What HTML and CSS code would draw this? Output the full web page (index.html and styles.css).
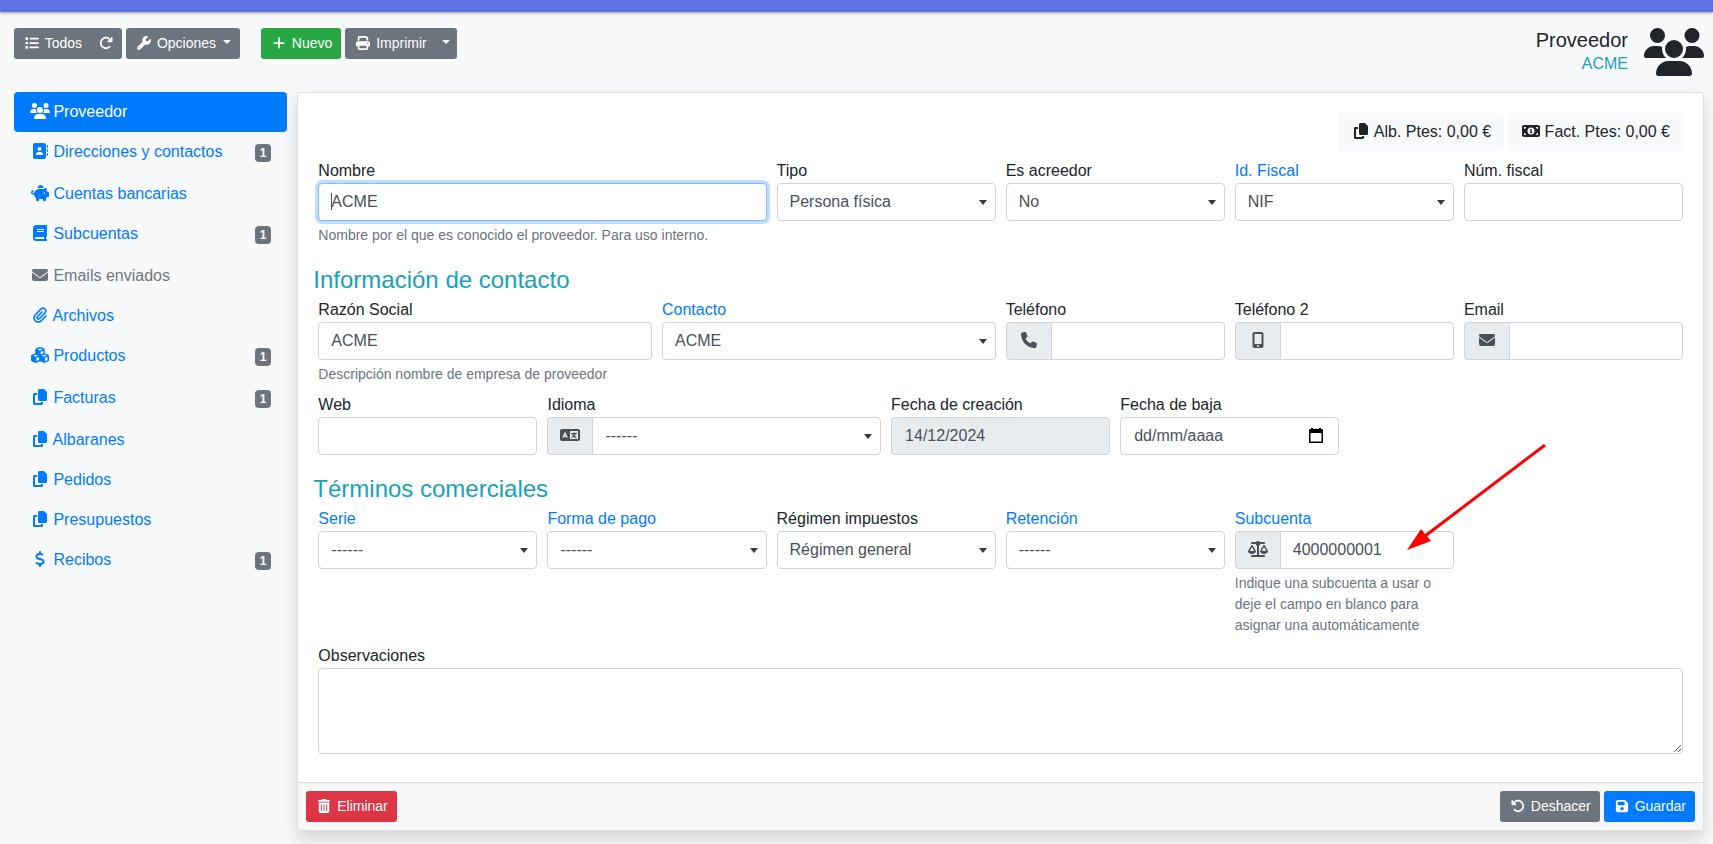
FILE: index.html
```html
<!DOCTYPE html>
<html lang="es">
<head>
<meta charset="utf-8">
<meta name="viewport" content="width=device-width, initial-scale=1">
<title>Proveedor ACME</title>
<link rel="stylesheet" href="styles.css">
</head>
<body>
<svg class="sprite" aria-hidden="true">
  <symbol id="i-list" viewBox="0 0 512 512"><path d="M40 48C26.700 48 16 58.700 16 72v48c0 13.300 10.700 24 24 24H88c13.300 0 24-10.700 24-24V72c0-13.300-10.700-24-24-24H40zM192 64c-17.700 0-32 14.300-32 32s14.300 32 32 32H480c17.700 0 32-14.300 32-32s-14.300-32-32-32H192zm0 160c-17.700 0-32 14.300-32 32s14.300 32 32 32H480c17.700 0 32-14.300 32-32s-14.300-32-32-32H192zm0 160c-17.700 0-32 14.300-32 32s14.300 32 32 32H480c17.700 0 32-14.300 32-32s-14.300-32-32-32H192zM16 232v48c0 13.300 10.700 24 24 24H88c13.300 0 24-10.700 24-24V232c0-13.300-10.700-24-24-24H40c-13.300 0-24 10.700-24 24zM40 368c-13.300 0-24 10.700-24 24v48c0 13.300 10.700 24 24 24H88c13.300 0 24-10.700 24-24V392c0-13.300-10.700-24-24-24H40z"/></symbol>
  <symbol id="i-redo" viewBox="0 0 512 512"><path d="M386.300 160H336c-17.700 0-32 14.300-32 32s14.300 32 32 32H464c17.700 0 32-14.300 32-32V64c0-17.700-14.300-32-32-32s-32 14.300-32 32v51.200L414.400 97.600c-87.500-87.500-229.300-87.500-316.800 0s-87.500 229.300 0 316.800s229.300 87.500 316.800 0c12.500-12.500 12.500-32.800 0-45.300s-32.800-12.500-45.300 0c-62.500 62.500-163.800 62.500-226.300 0s-62.500-163.800 0-226.300s163.800-62.500 226.300 0L386.300 160z"/></symbol>
  <symbol id="i-undo" viewBox="0 0 512 512"><path d="M125.700 160H176c17.700 0 32 14.300 32 32s-14.300 32-32 32H48c-17.700 0-32-14.300-32-32V64c0-17.700 14.300-32 32-32s32 14.300 32 32v51.200L97.600 97.600c87.500-87.500 229.300-87.500 316.800 0s87.500 229.300 0 316.800s-229.300 87.500-316.800 0c-12.500-12.500-12.500-32.800 0-45.300s32.800-12.500 45.300 0c62.500 62.500 163.800 62.500 226.300 0s62.500-163.800 0-226.300s-163.800-62.500-226.300 0L125.700 160z"/></symbol>
  <symbol id="i-wrench" viewBox="0 0 512 512"><path d="M352 320c88.400 0 160-71.600 160-160c0-15.300-2.200-30.100-6.200-44.200c-3.100-10.800-16.400-13.200-24.300-5.300l-76.800 76.800c-3 3-7.100 4.700-11.300 4.700H336c-8.800 0-16-7.200-16-16V118.600c0-4.200 1.700-8.300 4.700-11.300l76.800-76.800c7.900-7.900 5.400-21.200-5.300-24.300C382.100 2.200 367.300 0 352 0C263.600 0 192 71.600 192 160c0 19.100 3.400 37.500 9.500 54.500L19.900 396.100C7.200 408.800 0 426.100 0 444.100C0 481.600 30.400 512 67.900 512c18 0 35.300-7.200 48-19.900L297.500 310.500c17 6.200 35.400 9.500 54.500 9.500zM80 408a24 24 0 1 1 0 48 24 24 0 1 1 0-48z"/></symbol>
  <symbol id="i-plus" viewBox="0 0 448 512"><path d="M256 80c0-17.700-14.300-32-32-32s-32 14.300-32 32V224H48c-17.700 0-32 14.300-32 32s14.300 32 32 32H192V432c0 17.700 14.300 32 32 32s32-14.300 32-32V288H400c17.700 0 32-14.300 32-32s-14.300-32-32-32H256V80z"/></symbol>
  <symbol id="i-print" viewBox="0 0 512 512"><path d="M128 0C92.700 0 64 28.700 64 64v96h64V64H354.700L384 93.300V160h64V93.300c0-17-6.700-33.300-18.700-45.300L400 18.700C388 6.700 371.700 0 354.700 0H128zM384 352v32 64H128V384 368 352H384zm64 32h32c17.700 0 32-14.300 32-32V256c0-35.300-28.700-64-64-64H64c-35.300 0-64 28.700-64 64v96c0 17.700 14.300 32 32 32H64v64c0 35.300 28.700 64 64 64H384c35.300 0 64-28.700 64-64V384zM432 248a24 24 0 1 1 0 48 24 24 0 1 1 0-48z"/></symbol>
  <symbol id="i-users" viewBox="0 0 640 512"><path d="M144 0a80 80 0 1 1 0 160A80 80 0 1 1 144 0zM512 0a80 80 0 1 1 0 160A80 80 0 1 1 512 0zM0 298.700C0 239.800 47.800 192 106.700 192h42.700c15.900 0 31 3.500 44.600 9.700c-1.300 7.200-1.900 14.700-1.900 22.300c0 38.200 16.800 72.500 43.300 96H21.300C9.600 320 0 310.400 0 298.700zM405.300 320h-.7c26.600-23.500 43.300-57.800 43.300-96c0-7.600-.7-15-1.900-22.300c13.600-6.300 28.700-9.700 44.600-9.700h42.700C592.200 192 640 239.800 640 298.700c0 11.800-9.600 21.300-21.300 21.300H405.300zM224 224a96 96 0 1 1 192 0 96 96 0 1 1 -192 0zM128 485.300C128 411.700 187.700 352 261.300 352H378.700C452.300 352 512 411.700 512 485.300c0 14.700-11.900 26.700-26.700 26.700H154.700c-14.700 0-26.700-11.900-26.700-26.700z"/></symbol>
  <symbol id="i-address" viewBox="0 0 512 512"><path d="M96 0C60.700 0 32 28.700 32 64V448c0 35.300 28.700 64 64 64H384c35.300 0 64-28.700 64-64V64c0-35.300-28.700-64-64-64H96zM208 288h64c44.200 0 80 35.800 80 80c0 8.800-7.200 16-16 16H144c-8.800 0-16-7.200-16-16c0-44.200 35.800-80 80-80zm-32-96a64 64 0 1 1 128 0 64 64 0 1 1 -128 0zM512 80c0-8.800-7.200-16-16-16s-16 7.200-16 16v64c0 8.800 7.200 16 16 16s16-7.200 16-16V80zM496 192c-8.800 0-16 7.200-16 16v64c0 8.800 7.200 16 16 16s16-7.200 16-16V208c0-8.800-7.200-16-16-16zm16 144c0-8.800-7.200-16-16-16s-16 7.200-16 16v64c0 8.800 7.200 16 16 16s16-7.200 16-16V336z"/></symbol>
  <symbol id="i-piggy" viewBox="0 0 576 512"><path d="M400 96l0 .7c-5.300-.4-10.600-.7-16-.7H256c-16.500 0-32.500 2.100-47.800 6c-.1-2-.2-4-.2-6c0-53 43-96 96-96s96 43 96 96zm-16 32c3.500 0 7 .1 10.400 .3c4.200 .3 8.400 .7 12.600 1.300C424.600 109.100 450.800 96 480 96h11.500c10.400 0 18 9.800 15.500 19.900l-13.800 55.200c15.800 14.800 28.700 32.800 37.500 52.900H544c17.700 0 32 14.300 32 32v96c0 17.700-14.300 32-32 32H512c-9.100 12.100-19.900 22.900-32 32v64c0 17.700-14.300 32-32 32H416c-17.700 0-32-14.300-32-32V448H256v32c0 17.700-14.300 32-32 32H192c-17.700 0-32-14.300-32-32V416c-34.900-26.200-58.700-66.300-63.200-112H68c-37.600 0-68-30.400-68-68s30.400-68 68-68h4c13.300 0 24 10.700 24 24s-10.700 24-24 24H68c-11 0-20 9-20 20s9 20 20 20H99.200c12.100-59.800 57.700-107.500 116.300-122.800c12.900-3.400 26.500-5.200 40.500-5.200H384zm64 136a24 24 0 1 0 -48 0 24 24 0 1 0 48 0z"/></symbol>
  <symbol id="i-book" viewBox="0 0 448 512"><path d="M96 0C43 0 0 43 0 96V416c0 53 43 96 96 96H384h32c17.700 0 32-14.300 32-32s-14.300-32-32-32V384c17.700 0 32-14.300 32-32V32c0-17.700-14.300-32-32-32H384 96zm0 384H352v64H96c-17.700 0-32-14.300-32-32s14.300-32 32-32zm32-240c0-8.800 7.200-16 16-16H336c8.800 0 16 7.200 16 16s-7.200 16-16 16H144c-8.800 0-16-7.200-16-16zm16 48H336c8.800 0 16 7.200 16 16s-7.200 16-16 16H144c-8.800 0-16-7.200-16-16s7.200-16 16-16z"/></symbol>
  <symbol id="i-envelope" viewBox="0 0 512 512"><path d="M48 64C21.500 64 0 85.500 0 112c0 15.100 7.100 29.300 19.200 38.400L236.800 313.600c11.400 8.500 27 8.500 38.400 0L492.800 150.400c12.100-9.100 19.200-23.300 19.200-38.400c0-26.500-21.500-48-48-48H48zM0 176V384c0 35.300 28.700 64 64 64H448c35.300 0 64-28.700 64-64V176L294.400 339.200c-22.800 17.100-54 17.100-76.800 0L0 176z"/></symbol>
  <symbol id="i-clip" viewBox="0 0 448 512"><path d="M364.200 83.800c-24.400-24.400-64-24.400-88.400 0l-184 184c-42.100 42.100-42.100 110.300 0 152.400s110.300 42.100 152.400 0l152-152c10.900-10.900 28.700-10.900 39.600 0s10.900 28.700 0 39.600l-152 152c-64 64-167.600 64-231.600 0s-64-167.600 0-231.600l184-184c46.300-46.300 121.300-46.300 167.600 0s46.300 121.300 0 167.600l-176 176c-28.600 28.600-75 28.600-103.600 0s-28.600-75 0-103.600l144-144c10.900-10.900 28.700-10.900 39.600 0s10.900 28.700 0 39.600l-144 144c-6.700 6.700-6.700 17.700 0 24.400s17.700 6.700 24.400 0l176-176c24.400-24.400 24.400-64 0-88.400z"/></symbol>
  <symbol id="i-cubes" viewBox="0 0 576 512"><path d="M290.800 48.600l78.400 29.700L288 109.500 206.800 78.300l78.400-29.700c1.800-.7 3.800-.7 5.700 0zM136 92.500V204.700c-1.300 .4-2.600 .8-3.900 1.300l-96 36.400C14.400 250.600 0 271.500 0 294.700V413.900c0 22.200 13.100 42.300 33.500 51.300l96 42.200c14.400 6.300 30.700 6.300 45.100 0L288 457.500l113.500 49.900c14.400 6.300 30.700 6.300 45.100 0l96-42.200c20.300-8.900 33.500-29.100 33.500-51.300V294.700c0-23.300-14.400-44.100-36.100-52.400l-96-36.400c-1.300-.5-2.600-.9-3.900-1.300V92.500c0-23.300-14.400-44.100-36.100-52.400l-96-36.400c-12.800-4.800-26.900-4.800-39.700 0l-96 36.400C150.400 48.400 136 69.300 136 92.500zM392 210.600l-82.400 31.200V152.600L392 121v89.600zM154.800 250.900l78.400 29.700L152 311.700 70.800 280.600l78.400-29.700c1.800-.7 3.800-.7 5.700 0zm18.800 204.400V354.800L256 323.200v95.900l-82.400 36.200zM421.200 250.900c1.800-.7 3.800-.7 5.700 0l78.400 29.700L424 311.700l-81.200-31.100 78.400-29.700zM523.200 421.200l-77.600 34.100V354.800L528 323.200v90.700c0 3.200-1.900 6-4.800 7.300z"/></symbol>
  <symbol id="i-copy" viewBox="0 0 448 512"><path d="M208 0H332.100c12.700 0 24.900 5.100 33.900 14.100l67.900 67.900c9 9 14.100 21.200 14.100 33.900V336c0 26.500-21.500 48-48 48H208c-26.500 0-48-21.500-48-48V48c0-26.500 21.500-48 48-48zM48 128h80v64H64V448H256V416h64v48c0 26.500-21.500 48-48 48H48c-26.500 0-48-21.500-48-48V176c0-26.500 21.500-48 48-48z"/></symbol>
  <symbol id="i-dollar" viewBox="0 0 320 512"><path d="M160 0c17.700 0 32 14.300 32 32V67.700c1.600 .2 3.100 .4 4.700 .7c.4 .1 .7 .1 1.100 .2l48 8.800c17.400 3.200 28.900 19.900 25.700 37.200s-19.900 28.900-37.200 25.700l-47.500-8.700c-31.300-4.600-58.900-1.500-78.300 6.200s-27.200 18.300-29 28.100c-2 10.700-.5 16.700 1.200 20.400c1.800 3.900 5.500 8.300 12.800 13.200c16.300 10.700 41.300 17.700 73.700 26.300l2.900 .8c28.600 7.600 63.600 16.800 89.600 33.800c14.200 9.300 27.600 21.900 35.900 39.500c8.500 17.900 10.300 37.900 6.400 59.200c-6.900 38-33.100 63.400-65.600 76.700c-13.700 5.600-28.600 9.200-44.400 11V480c0 17.700-14.300 32-32 32s-32-14.300-32-32V445.100l-1.500-.2c-24.400-3.800-64.500-14.300-91.500-26.300c-16.100-7.200-23.400-26.100-16.200-42.200s26.100-23.400 42.200-16.200c20.900 9.300 55.300 18.500 75.200 21.600c31.900 4.700 58.200 2 76-5.300c16.900-6.900 24.600-16.900 26.800-28.900c1.900-10.600 .4-16.700-1.300-20.400c-1.900-4-5.600-8.400-13-13.300c-16.400-10.700-41.500-17.700-74-26.300l-2.800-.7C119.400 279.300 84.400 270 58.400 253c-14.200-9.300-27.500-22-35.800-39.600c-8.400-17.900-10.100-37.900-6.100-59.200C23.700 116 52.300 91.200 84.800 78.300c13.300-5.300 27.900-8.900 43.200-11V32c0-17.700 14.300-32 32-32z"/></symbol>
  <symbol id="i-money" viewBox="0 0 576 512"><path d="M64 64C28.700 64 0 92.700 0 128V384c0 35.300 28.700 64 64 64H512c35.300 0 64-28.700 64-64V128c0-35.300-28.700-64-64-64H64zm64 320H64V320c35.300 0 64 28.700 64 64zM64 192V128h64c0 35.300-28.700 64-64 64zM448 384c0-35.300 28.700-64 64-64v64H448zm64-192c-35.300 0-64-28.700-64-64h64v64zM288 144a112 112 0 1 0 0 224 112 112 0 1 0 0-224zM252 208c0-11 9-20 20-20h16c11 0 20 9 20 20v68h4c11 0 20 9 20 20s-9 20-20 20H264c-11 0-20-9-20-20s9-20 20-20h4V227.600c-9.100-1.900-16-9.900-16-19.600z" fill-rule="evenodd"/></symbol>
  <symbol id="i-phone" viewBox="0 0 512 512"><path d="M164.900 24.600c-7.700-18.600-28-28.500-47.400-23.200l-88 24C12.100 30.200 0 46 0 64C0 311.400 200.600 512 448 512c18 0 33.800-12.100 38.600-29.500l24-88c5.300-19.400-4.600-39.700-23.200-47.400l-96-40c-16.300-6.800-35.200-2.100-46.300 11.600L304.700 368C234.300 334.700 177.300 277.700 144 207.300L193.300 167c13.700-11.200 18.400-30 11.600-46.300l-40-96z"/></symbol>
  <symbol id="i-mobile" viewBox="0 0 384 512"><path d="M16 64C16 28.700 44.700 0 80 0H304c35.300 0 64 28.700 64 64V448c0 35.300-28.700 64-64 64H80c-35.300 0-64-28.700-64-64V64zM224 448a32 32 0 1 0 -64 0 32 32 0 1 0 64 0zM304 64H80V384H304V64z"/></symbol>
  <symbol id="i-language" viewBox="0 0 640 512"><path d="M0 128C0 92.700 28.700 64 64 64H576c35.300 0 64 28.700 64 64V384c0 35.300-28.700 64-64 64H64c-35.300 0-64-28.700-64-64V128zm320 0V384H576V128H320zM178.300 175.900c-3.200-7.200-10.400-11.900-18.300-11.900s-15.100 4.700-18.300 11.900l-64 144c-4.500 10.100 .1 21.900 10.200 26.400s21.900-.1 26.400-10.200l8.900-20.100h73.600l8.900 20.100c4.500 10.100 16.300 14.600 26.400 10.200s14.600-16.300 10.200-26.400l-64-144zM160 233.200L179 276H141l19-42.800z" fill-rule="evenodd"/><path d="M448 184v24M376 208H520M494 210C478 264 440 306 382 328M410 248C430 286 462 312 506 330" fill="none" stroke="currentColor" stroke-width="40" stroke-linecap="round"/></symbol>
  <symbol id="i-scale" viewBox="0 0 640 512"><path d="M384 32H512c17.700 0 32 14.300 32 32s-14.300 32-32 32H398.400c-5.200 25.800-22.900 47.100-46.400 57.300V448H512c17.700 0 32 14.300 32 32s-14.300 32-32 32H320 128c-17.700 0-32-14.300-32-32s14.300-32 32-32H288V153.300c-23.500-10.300-41.200-31.600-46.400-57.300H128c-17.700 0-32-14.300-32-32s14.300-32 32-32H256c14.600-19.400 37.800-32 64-32s49.400 12.600 64 32zm55.600 288H584.400L512 195.800 439.600 320zM512 416c-62.900 0-115.200-34-126-78.900c-2.600-11 1-22.300 6.700-32.100l95.200-163.200c5-8.600 14.200-13.800 24.100-13.800s19.100 5.300 24.100 13.800l95.200 163.200c5.700 9.800 9.300 21.100 6.700 32.100C627.200 382 574.900 416 512 416zM126.800 195.800L54.400 320H199.300L126.800 195.800zM.9 337.100c-2.600-11 1-22.300 6.700-32.100l95.200-163.200c5-8.600 14.200-13.800 24.100-13.800s19.100 5.300 24.100 13.800l95.200 163.200c5.700 9.800 9.300 21.100 6.700 32.100C242 382 189.700 416 126.800 416S11.700 382 .9 337.100z"/></symbol>
  <symbol id="i-trash" viewBox="0 0 448 512"><path d="M135.200 17.700C140.600 6.800 151.700 0 163.800 0H284.200c12.100 0 23.200 6.800 28.600 17.700L320 32h96c17.700 0 32 14.300 32 32s-14.300 32-32 32H32C14.300 96 0 81.700 0 64S14.300 32 32 32h96l7.200-14.300zM32 128H416V448c0 35.300-28.700 64-64 64H96c-35.300 0-64-28.700-64-64V128zm96 64c-8.800 0-16 7.200-16 16V432c0 8.800 7.200 16 16 16s16-7.200 16-16V208c0-8.800-7.200-16-16-16zm96 0c-8.800 0-16 7.200-16 16V432c0 8.800 7.200 16 16 16s16-7.200 16-16V208c0-8.800-7.200-16-16-16zm96 0c-8.800 0-16 7.200-16 16V432c0 8.800 7.200 16 16 16s16-7.200 16-16V208c0-8.800-7.200-16-16-16z"/></symbol>
  <symbol id="i-save" viewBox="0 0 448 512"><path d="M64 32C28.700 32 0 60.700 0 96V416c0 35.300 28.700 64 64 64H384c35.300 0 64-28.700 64-64V173.300c0-17-6.700-33.300-18.700-45.300L352 50.700C340 38.700 323.700 32 306.700 32H64zm0 96c0-17.700 14.300-32 32-32H288c17.700 0 32 14.300 32 32v64c0 17.700-14.300 32-32 32H96c-17.700 0-32-14.300-32-32V128zM224 288a64 64 0 1 1 0 128 64 64 0 1 1 0-128z"/></symbol>
  <symbol id="i-calendar" viewBox="0 0 14 15"><path d="M1 1h1V0h2v1h6V0h2v1h1q1 0 1 1v12q0 1-1 1H1q-1 0-1-1V2q0-1 1-1zM1.500 5v8.500h11V5z" fill-rule="evenodd"/></symbol>
</svg>

<div class="topbar"></div>

<div class="page">
  <header class="page-header">
    <div class="toolbar">
      <div class="btn-group">
        <a class="btn btn-secondary" href="#todos"><svg class="icon"><use href="#i-list"/></svg> Todos</a>
        <button class="btn btn-secondary" type="button" aria-label="Recargar"><svg class="icon icon-square"><use href="#i-redo"/></svg></button>
      </div>
      <button class="btn btn-secondary" type="button"><svg class="icon"><use href="#i-wrench"/></svg> Opciones <span class="caret"></span></button>
      <div class="toolbar-actions">
        <a class="btn btn-success" href="#nuevo"><svg class="icon"><use href="#i-plus"/></svg> Nuevo</a>
        <div class="btn-group">
          <button class="btn btn-secondary" type="button"><svg class="icon"><use href="#i-print"/></svg> Imprimir</button>
          <button class="btn btn-secondary btn-split" type="button" aria-label="Formatos de impresión"><span class="caret"></span></button>
        </div>
      </div>
    </div>
    <div class="page-title">
      <div class="page-title-text">
        <h1>Proveedor</h1>
        <p>ACME</p>
      </div>
      <svg class="page-title-icon"><use href="#i-users"/></svg>
    </div>
  </header>

  <div class="layout">
    <nav class="sidebar" aria-label="Secciones">
      <a class="nav-link active" href="#proveedor"><span><svg class="icon"><use href="#i-users"/></svg> Proveedor</span></a>
      <a class="nav-link" href="#direcciones"><span><svg class="icon"><use href="#i-address"/></svg> Direcciones y contactos</span><span class="badge">1</span></a>
      <a class="nav-link" href="#cuentas"><span><svg class="icon"><use href="#i-piggy"/></svg> Cuentas bancarias</span></a>
      <a class="nav-link" href="#subcuentas"><span><svg class="icon"><use href="#i-book"/></svg> Subcuentas</span><span class="badge">1</span></a>
      <a class="nav-link disabled" href="#emails"><span><svg class="icon"><use href="#i-envelope"/></svg> Emails enviados</span></a>
      <a class="nav-link" href="#archivos"><span><svg class="icon"><use href="#i-clip"/></svg> Archivos</span></a>
      <a class="nav-link" href="#productos"><span><svg class="icon"><use href="#i-cubes"/></svg> Productos</span><span class="badge">1</span></a>
      <a class="nav-link" href="#facturas"><span><svg class="icon"><use href="#i-copy"/></svg> Facturas</span><span class="badge">1</span></a>
      <a class="nav-link" href="#albaranes"><span><svg class="icon"><use href="#i-copy"/></svg> Albaranes</span></a>
      <a class="nav-link" href="#pedidos"><span><svg class="icon"><use href="#i-copy"/></svg> Pedidos</span></a>
      <a class="nav-link" href="#presupuestos"><span><svg class="icon"><use href="#i-copy"/></svg> Presupuestos</span></a>
      <a class="nav-link" href="#recibos"><span><svg class="icon"><use href="#i-dollar"/></svg> Recibos</span><span class="badge">1</span></a>
    </nav>

    <form class="card">
      <div class="card-body">
        <div class="stats">
          <button class="stat" type="button"><svg class="icon"><use href="#i-copy"/></svg> Alb. Ptes: 0,00 €</button>
          <button class="stat" type="button"><svg class="icon"><use href="#i-money"/></svg> Fact. Ptes: 0,00 €</button>
        </div>

        <div class="form-row">
          <div class="field span-4">
            <label for="nombre">Nombre</label>
            <input class="control is-focused" id="nombre" type="text" value="ACME">
            <small>Nombre por el que es conocido el proveedor. Para uso interno.</small>
          </div>
          <div class="field span-2">
            <label for="tipo">Tipo</label>
            <select class="control" id="tipo"><option>Persona física</option></select>
          </div>
          <div class="field span-2">
            <label for="acreedor">Es acreedor</label>
            <select class="control" id="acreedor"><option>No</option></select>
          </div>
          <div class="field span-2">
            <label for="idfiscal"><a href="#idfiscal">Id. Fiscal</a></label>
            <select class="control" id="idfiscal"><option>NIF</option></select>
          </div>
          <div class="field span-2">
            <label for="numfiscal">Núm. fiscal</label>
            <input class="control" id="numfiscal" type="text">
          </div>
        </div>

        <h2>Información de contacto</h2>
        <div class="form-row">
          <div class="field span-3">
            <label for="razon">Razón Social</label>
            <input class="control" id="razon" type="text" value="ACME">
            <small>Descripción nombre de empresa de proveedor</small>
          </div>
          <div class="field span-3">
            <label for="contacto"><a href="#contacto">Contacto</a></label>
            <select class="control" id="contacto"><option>ACME</option></select>
          </div>
          <div class="field span-2">
            <label for="tel1">Teléfono</label>
            <div class="input-group"><span class="addon"><svg class="icon"><use href="#i-phone"/></svg></span><input class="control" id="tel1" type="tel"></div>
          </div>
          <div class="field span-2">
            <label for="tel2">Teléfono 2</label>
            <div class="input-group"><span class="addon"><svg class="icon"><use href="#i-mobile"/></svg></span><input class="control" id="tel2" type="tel"></div>
          </div>
          <div class="field span-2">
            <label for="email">Email</label>
            <div class="input-group"><span class="addon"><svg class="icon"><use href="#i-envelope"/></svg></span><input class="control" id="email" type="email"></div>
          </div>
          <div class="field span-2">
            <label for="web">Web</label>
            <input class="control" id="web" type="url">
          </div>
          <div class="field span-3">
            <label for="idioma">Idioma</label>
            <div class="input-group"><span class="addon"><svg class="icon"><use href="#i-language"/></svg></span><select class="control" id="idioma"><option>------</option></select></div>
          </div>
          <div class="field span-2">
            <label for="alta">Fecha de creación</label>
            <input class="control control-date" id="alta" type="text" value="14/12/2024" readonly>
          </div>
          <div class="field span-2">
            <label for="baja">Fecha de baja</label>
            <div class="date-group">
              <input class="control control-date" id="baja" type="text" placeholder="dd/mm/aaaa">
              <button class="date-button" type="button" aria-label="Abrir calendario"><svg><use href="#i-calendar"/></svg></button>
            </div>
          </div>
        </div>

        <h2>Términos comerciales</h2>
        <div class="form-row">
          <div class="field span-2">
            <label for="serie"><a href="#serie">Serie</a></label>
            <select class="control" id="serie"><option>------</option></select>
          </div>
          <div class="field span-2">
            <label for="pago"><a href="#pago">Forma de pago</a></label>
            <select class="control" id="pago"><option>------</option></select>
          </div>
          <div class="field span-2">
            <label for="regimen">Régimen impuestos</label>
            <select class="control" id="regimen"><option>Régimen general</option></select>
          </div>
          <div class="field span-2">
            <label for="retencion"><a href="#retencion">Retención</a></label>
            <select class="control" id="retencion"><option>------</option></select>
          </div>
          <div class="field span-2 has-pointer">
            <label for="subcuenta"><a href="#subcuenta">Subcuenta</a></label>
            <div class="input-group"><span class="addon"><svg class="icon"><use href="#i-scale"/></svg></span><input class="control" id="subcuenta" type="text" value="4000000001"></div>
            <small>Indique una subcuenta a usar o deje el campo en blanco para asignar una automáticamente</small>
            <svg class="pointer" viewBox="0 0 140 107" aria-hidden="true"><path d="M138 2L18 93" fill="none" stroke="#f00" stroke-width="3"/><path d="M0 107L14 86L24 98z" fill="#f00"/></svg>
          </div>
          <div class="field span-12">
            <label for="observaciones">Observaciones</label>
            <textarea class="control" id="observaciones" rows="3"></textarea>
          </div>
        </div>
      </div>
      <div class="card-footer">
        <button class="btn btn-danger" type="button"><svg class="icon"><use href="#i-trash"/></svg> Eliminar</button>
        <div class="footer-actions">
          <button class="btn btn-secondary" type="reset"><svg class="icon"><use href="#i-undo"/></svg> Deshacer</button>
          <button class="btn btn-primary" type="submit"><svg class="icon"><use href="#i-save"/></svg> Guardar</button>
        </div>
      </div>
    </form>
  </div>
</div>
</body>
</html>
```
FILE: styles.css
```css
*,
*::before,
*::after {
  box-sizing: border-box;
}

body {
  margin: 0;
  background: #f8f9fb;
  color: #212529;
  font: 16px/24px "Liberation Sans", Arial, sans-serif;
}

a {
  color: #007bff;
  text-decoration: none;
}

.sprite {
  position: absolute;
  width: 0;
  height: 0;
}

.icon {
  width: 20px;
  height: 16px;
  fill: currentColor;
  vertical-align: -2px;
}

.nav-link .icon,
.stat .icon {
  margin-right: -1px;
}

.topbar {
  height: 12px;
  background: #5e72e4;
  box-shadow: 0 1px 3px rgba(0, 0, 0, 0.4);
}

.page {
  padding: 16px 9px 13px 14px;
}

.page-header {
  display: flex;
  justify-content: space-between;
  align-items: flex-start;
  margin-bottom: 16px;
}

.toolbar,
.toolbar-actions,
.footer-actions,
.stats {
  display: flex;
  gap: 4px;
}

.toolbar-actions {
  margin-left: 17px;
}

.btn-group {
  display: flex;
}

.btn {
  display: block;
  padding: 4px 8px;
  border: 1px solid transparent;
  border-radius: 3px;
  color: #fff;
  font: 14px/21px "Liberation Sans", Arial, sans-serif;
  white-space: nowrap;
}

.btn .icon {
  width: 18px;
  height: 14px;
}

.btn .icon-square {
  width: 14px;
}

.btn-group .btn:first-child {
  border-radius: 3px 0 0 3px;
}

.btn-group .btn:last-child {
  margin-left: -1px;
  border-radius: 0 3px 3px 0;
}

.btn-split {
  padding: 4px 6px;
}

.btn-secondary {
  background: #6c757d;
}

.btn-success {
  background: #28a745;
}

.btn-danger {
  background: #dc3545;
}

.btn-primary {
  background: #007bff;
}

.caret {
  display: inline-block;
  margin-left: 3px;
  border: 4px solid transparent;
  border-top-color: currentColor;
  border-bottom: 0;
  vertical-align: 4px;
}

.btn-split .caret {
  margin-left: 0;
}

.page-title {
  display: flex;
  gap: 16px;
  text-align: right;
}

.page-title h1 {
  margin: 0;
  font-size: 20px;
  font-weight: 400;
  line-height: 24px;
}

.page-title p {
  margin: 0;
  color: #17a2b8;
}

.page-title-icon {
  width: 60px;
  height: 48px;
  fill: currentColor;
}

.layout,
.form-row {
  display: grid;
  grid-template-columns: repeat(12, minmax(0, 1fr));
  column-gap: 10px;
}

.layout {
  align-items: start;
}

.sidebar {
  grid-column: span 2;
}

.nav-link {
  display: flex;
  justify-content: space-between;
  align-items: flex-start;
  padding: 8px 16px;
  border-radius: 4px;
}

.nav-link.active {
  background: #007bff;
  color: #fff;
}

.nav-link.disabled {
  color: #6c757d;
}

.badge {
  margin: 4px 0;
  padding: 3px 5px;
  border-radius: 4px;
  background: #6c757d;
  color: #fff;
  font-size: 12px;
  font-weight: 700;
  line-height: 12px;
}

.card {
  grid-column: span 10;
  border: 1px solid rgba(0, 0, 0, 0.125);
  border-radius: 4px;
  background: #fff;
  box-shadow: 0 8px 16px rgba(0, 0, 0, 0.15);
}

.card-body {
  padding: 20px;
}

.stats {
  justify-content: flex-end;
  margin-bottom: 8px;
}

.stat {
  padding: 6px 12px;
  border: 1px solid #f8f9fa;
  border-radius: 4px;
  background: #f8f9fa;
  color: #212529;
  font: inherit;
}

h2 {
  margin: 11px 0 4px -5px;
  color: #17a2b8;
  font-size: 24px;
  font-weight: 400;
  line-height: 29px;
}

.field {
  margin-bottom: 8px;
}

.field label,
.field small {
  display: block;
}

.field small {
  margin-top: 4px;
  color: #6c757d;
  font-size: 14px;
  line-height: 21px;
}

.span-2 {
  grid-column: span 2;
}

.span-3 {
  grid-column: span 3;
}

.span-4 {
  grid-column: span 4;
}

.span-12 {
  grid-column: span 12;
}

.control {
  display: block;
  width: 100%;
  height: 38px;
  padding: 6px 12px;
  border: 1px solid #ced4da;
  border-radius: 4px;
  background: #fff;
  color: #495057;
  font: inherit;
}

.control[readonly] {
  background: #e9ecef;
}

.control::placeholder {
  color: #495057;
  opacity: 1;
}

select.control {
  appearance: none;
  background: #fff url("data:image/svg+xml,%3Csvg xmlns='http://www.w3.org/2000/svg' viewBox='0 0 8 5'%3E%3Cpath d='M0 0h8L4 5z' fill='%23343a40'/%3E%3C/svg%3E") no-repeat right 8px center / 8px 5px;
}

textarea.control {
  height: 86px;
}

/* Focus ring, with the text cursor before the first letter */
.control.is-focused {
  border-color: #80bdff;
  outline: 0;
  background: linear-gradient(#495057, #495057) no-repeat 12px 9px / 1px 17px #fff;
  box-shadow: 0 0 0 3px rgba(0, 123, 255, 0.25);
}

.control-date {
  padding-left: 13px;
}

.date-group {
  position: relative;
}

.date-button {
  position: absolute;
  top: 8px;
  right: 12px;
  display: flex;
  padding: 3px 4px;
  border: 0;
  background: none;
}

.date-button svg {
  width: 14px;
  height: 15px;
}

.input-group {
  display: flex;
}

.addon {
  flex: none;
  padding: 6px 12px;
  border: 1px solid #ced4da;
  border-radius: 4px 0 0 4px;
  background: #e9ecef;
  color: #495057;
}

.input-group .control {
  flex: 1;
  min-width: 0;
  margin-left: -1px;
  border-radius: 0 4px 4px 0;
}

.has-pointer {
  position: relative;
}

.pointer {
  position: absolute;
  top: -64px;
  left: 172px;
  width: 140px;
  height: 107px;
  pointer-events: none;
}

.card-footer {
  display: flex;
  justify-content: space-between;
  padding: 8px;
  border-top: 1px solid rgba(0, 0, 0, 0.125);
  border-radius: 0 0 3px 3px;
  background: #f7f7f7;
}
```
